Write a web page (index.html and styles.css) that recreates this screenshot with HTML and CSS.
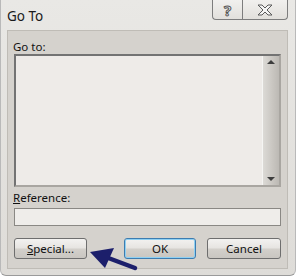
FILE: index.html
```html
<!DOCTYPE html>
<html lang="en">
<head>
  <meta charset="UTF-8" />
  <title>Go To</title>
  <link rel="stylesheet" href="styles.css">
</head>
<body>
  <div class="window">
    <div class="title-bar">
      <div class="title">Go To</div>
      <div class="caption-buttons">
        <div class="cap-btn help">?</div>
        <div class="cap-btn close">
          <svg width="18" height="12" viewBox="0 0 18 12">
            <path d="M2 1h4l3 3 3-3h4l-5 5 5 5h-4l-3-3-3 3H2l5-5z" fill="#f4f4f4" stroke="#5a5a5a" stroke-width="1"/>
          </svg>
        </div>
      </div>
    </div>

    <div class="client">
      <div class="label">Go to:</div>
      <div class="listbox">
        <div class="list-area"></div>
        <div class="scrollbar">
          <div class="arrow up"></div>
          <div class="arrow down"></div>
        </div>
      </div>

      <div class="label ref-label"><u>R</u>eference:</div>
      <div class="textbox"></div>

      <div class="button-row">
        <div class="btn special"><u>S</u>pecial...</div>
        <div class="spacer"></div>
        <div class="btn ok">OK</div>
        <div class="btn cancel">Cancel</div>
      </div>
    </div>

    <!-- 注釈の矢印 -->
    <svg class="pointer" width="60" height="30" viewBox="0 0 60 30">
      <path d="M46 24 L14 12" stroke="#1c1f6b" stroke-width="4.5" stroke-linecap="round"/>
      <path d="M1 8 L25 4 L16 24 Z" fill="#1c1f6b"/>
    </svg>
  </div>
</body>
</html>
```

FILE: styles.css
```css
body {
  margin: 0;
  padding: 0;
  background-color: #ffffff;
  font-family: "Noto Sans", "Open Sans", sans-serif;
  font-size: 11px;
  color: #111;
}

.window {
  position: relative;
  width: 296px;
  height: 276px;
  background: linear-gradient(#e9e8e5, #dedcd8);
  border-left: 1px solid #b9b9b9;
  border-right: 1px solid #b9b9b9;
  border-bottom: 1px solid #9a9a9a;
  border-radius: 0 0 6px 6px;
  box-sizing: border-box;
}

.title-bar {
  display: flex;
  justify-content: space-between;
  height: 30px;
}

.title {
  font-size: 13.5px;
  padding: 7px 0 0 6px;
  color: #1a1a1a;
}

.caption-buttons {
  display: flex;
  margin-right: 7px;
  height: 20px;
}

.cap-btn {
  height: 19px;
  display: flex;
  align-items: center;
  justify-content: center;
  background: linear-gradient(#f1f0ee, #e2e0dc);
  border: 1px solid #7d7d7d;
  border-top: none;
}

.help {
  width: 29px;
  border-radius: 0 0 0 4px;
  border-right: none;
  font-weight: bold;
  font-size: 15px;
  color: #f4f4f4;
  -webkit-text-stroke: 1px #555;
}

.close {
  width: 44px;
  border-radius: 0 0 4px 0;
}

.client {
  margin: 0 7px 0 6px;
  height: 239px;
  background-color: #d5d2cd;
  border: 1px solid #bfbcb6;
  box-sizing: border-box;
  padding: 9px 6px 9px 5px;
  display: flex;
  flex-direction: column;
}

.label {
  height: 14px;
  line-height: 14px;
  font-size: 11.5px;
}

.listbox {
  display: flex;
  height: 133px;
  margin-left: 1px;
  border: 2px solid #737373;
  border-right-color: #a9a6a1;
  border-bottom-color: #a9a6a1;
  box-sizing: border-box;
  background-color: #eeebe8;
}

.list-area {
  flex: 1;
}

.scrollbar {
  width: 16px;
  background: linear-gradient(90deg, #dcdad6, #c9c6c1 60%, #bcb9b4);
  border-left: 1px solid #f5f5f3;
  display: flex;
  flex-direction: column;
  justify-content: space-between;
  align-items: center;
  padding: 4px 0;
}

.arrow {
  width: 0;
  height: 0;
  border-left: 4px solid transparent;
  border-right: 4px solid transparent;
}

.arrow.up {
  border-bottom: 4px solid #3d3d3d;
}

.arrow.down {
  border-top: 4px solid #3d3d3d;
}

.ref-label {
  margin-top: 4px;
}

.ref-label u,
.special u {
  text-decoration-thickness: 1px;
}

.textbox {
  height: 18px;
  margin-top: 3px;
  margin-left: 1px;
  background-color: #efedea;
  border: 1px solid #8a8884;
  box-sizing: border-box;
}

.button-row {
  display: flex;
  margin-top: 12px;
  height: 21px;
}

.spacer {
  flex: 1;
}

.btn {
  display: flex;
  align-items: center;
  justify-content: center;
  height: 21px;
  box-sizing: border-box;
  border: 1px solid #6e6e6e;
  border-radius: 3px;
  background: linear-gradient(#f3f2f0 0%, #e6e4e1 48%, #d3d0cb 52%, #c9c6c1 100%);
  font-size: 11.5px;
}

.special {
  width: 73px;
  margin-left: 1px;
}

.ok {
  width: 72px;
  border-color: #3d7cb0;
  box-shadow: inset 0 0 0 1px #8fd0f2;
}

.cancel {
  width: 74px;
  margin-left: 11px;
}

.pointer {
  position: absolute;
  left: 88px;
  top: 244px;
}
```
